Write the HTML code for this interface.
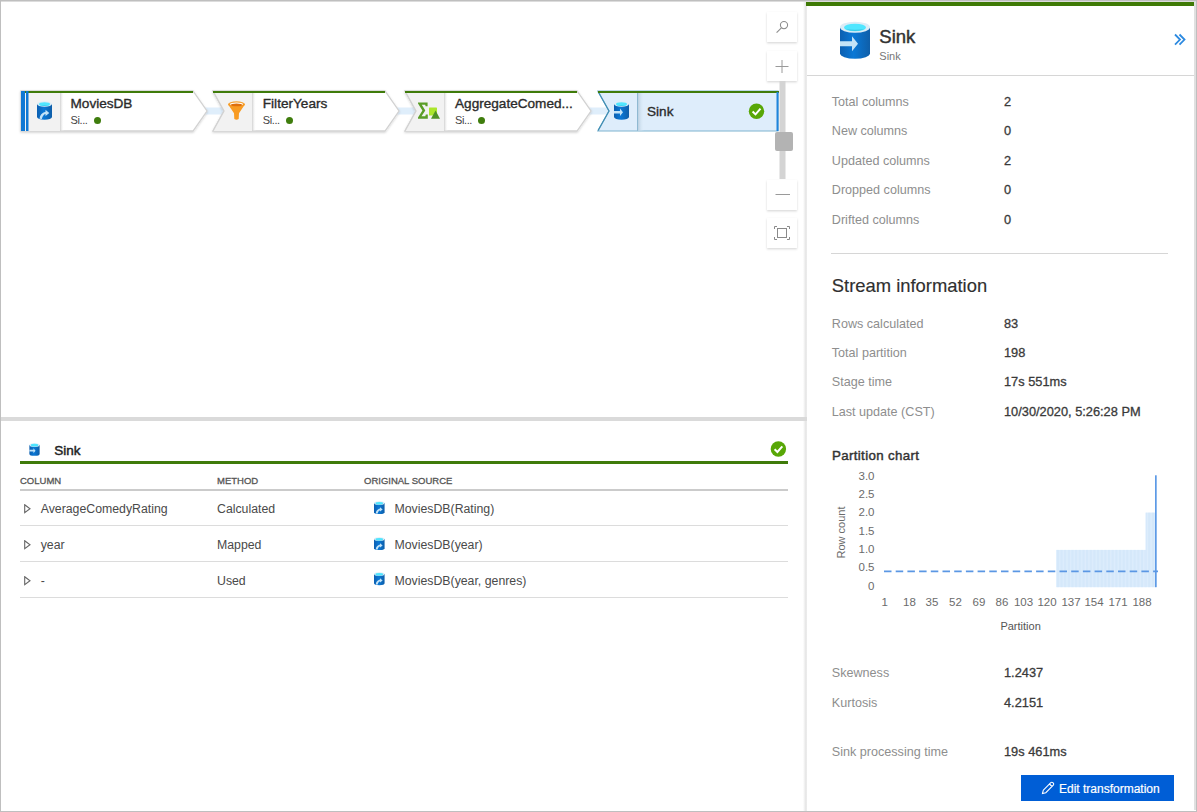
<!DOCTYPE html>
<html><head><meta charset="utf-8">
<style>
*{box-sizing:border-box;margin:0;padding:0}
html,body{width:1197px;height:812px;overflow:hidden;background:#fff;font-family:"Liberation Sans",sans-serif;}
.a{position:absolute;display:block}
.t{position:absolute;white-space:nowrap;line-height:1}
</style></head><body>

<svg class="a" style="left:0;top:0" width="806" height="417">
<defs><filter id="sh" x="-5%" y="-20%" width="110%" height="150%"><feDropShadow dx="0" dy="1" stdDeviation="0.8" flood-color="#000" flood-opacity="0.18"/></filter><filter id="sh2" x="-20%" y="-20%" width="140%" height="150%"><feDropShadow dx="0" dy="1.2" stdDeviation="1.2" flood-color="#000" flood-opacity="0.16"/></filter><linearGradient id="dv" x1="0" x2="1"><stop offset="0" stop-color="#d0d0d0"/><stop offset="1" stop-color="#ffffff" stop-opacity="0"/></linearGradient><linearGradient id="dvb" x1="0" x2="1"><stop offset="0" stop-color="#b9cfe0"/><stop offset="1" stop-color="#deedfa" stop-opacity="0"/></linearGradient></defs>
<rect x="204" y="107.5" width="22" height="7" fill="#dfeefb"/>
<rect x="396" y="107.5" width="22" height="7" fill="#dfeefb"/>
<rect x="588" y="107.5" width="22" height="7" fill="#dfeefb"/>
<polygon points="21,91 193,91 207,111 193,131 21,131 21,111" fill="#fff" stroke="#d2d2d2" stroke-width="1.3" filter="url(#sh)"/>
<polygon points="21,91 60,91 60,131 21,131 21,111" fill="#f2f2f2"/>
<rect x="60" y="92" width="4" height="39" fill="url(#dv)"/>
<rect x="21" y="91" width="172" height="2" fill="#3f7b0a"/>
<polygon points="213,91 385,91 399,111 385,131 213,131 224,111" fill="#fff" stroke="#d2d2d2" stroke-width="1.3" filter="url(#sh)"/>
<polygon points="213,91 252,91 252,131 213,131 224,111" fill="#f2f2f2"/>
<polyline points="213,91 224,111 213,131" fill="none" stroke="#d2d2d2" stroke-width="1.3"/>
<rect x="252" y="92" width="4" height="39" fill="url(#dv)"/>
<rect x="213" y="91" width="172" height="2" fill="#3f7b0a"/>
<polygon points="405,91 577,91 591,111 577,131 405,131 416,111" fill="#fff" stroke="#d2d2d2" stroke-width="1.3" filter="url(#sh)"/>
<polygon points="405,91 444,91 444,131 405,131 416,111" fill="#f2f2f2"/>
<polyline points="405,91 416,111 405,131" fill="none" stroke="#d2d2d2" stroke-width="1.3"/>
<rect x="444" y="92" width="4" height="39" fill="url(#dv)"/>
<rect x="405" y="91" width="172" height="2" fill="#3f7b0a"/>
<rect x="21" y="91" width="4" height="40" fill="#0f78d4"/><rect x="26" y="91" width="2.5" height="40" fill="#0f78d4"/>
<polygon points="598,91 778,91 778,131 598,131 609,111" fill="#deedfb" stroke="#7fb3cf" stroke-width="1.2"/>
<polyline points="598,91.5 609,111 598,130.5" fill="none" stroke="#3f8db3" stroke-width="1.2"/>
<rect x="637" y="92" width="1" height="39" fill="#8fb9d2"/><rect x="638" y="92" width="6" height="39" fill="url(#dvb)"/>
<rect x="598" y="91" width="181" height="2" fill="#3f7b0a"/>
<rect x="776.5" y="92" width="2" height="39" fill="#1e84dc"/>
<circle cx="756.5" cy="111.3" r="7.7" fill="#58a707"/><path d="M752.6,111.5 L755.5,114.4 L760.5,108.6" stroke="#fff" stroke-width="2" fill="none"/>
<g transform="translate(228,101.3)"><ellipse cx="8.5" cy="3" rx="8.5" ry="3" fill="#f7a436"/><path d="M0,3 L6,12 L6.3,17.8 Q8.5,19.3 10.7,17.8 L11,12 L17,3 Z" fill="#f89b22"/><ellipse cx="8.5" cy="3" rx="6.5" ry="1.8" fill="#fff"/><ellipse cx="8.5" cy="3.6" rx="6" ry="1.4" fill="#de6f0c"/></g>
<path d="M418,102.4 H427.6 V106.2 H425.6 L425.2,104.7 H421.8 L425.3,110.5 L421.5,116.3 H425.3 L425.8,114.6 H427.8 V118.7 H418 V117.6 L422.4,110.5 L418,103.6 Z" fill="#5a9d27"/><rect x="429" y="107.6" width="8" height="8" rx="0.6" fill="#abe62c"/><path d="M431,118.7 L435.6,110.6 L440,118.7 Z" fill="#4f9225"/>
<rect x="767" y="12" width="30" height="30" fill="#fff" filter="url(#sh2)"/>
<rect x="767" y="51" width="30" height="30" fill="#fff" filter="url(#sh2)"/>
<rect x="767" y="180" width="30" height="30" fill="#fff" filter="url(#sh2)"/>
<rect x="767" y="218" width="30" height="30" fill="#fff" filter="url(#sh2)"/>
<rect x="779.5" y="81" width="6" height="98" fill="#d4d4d4"/>
<rect x="775" y="132" width="18" height="19" rx="2" fill="#b3b3b3"/>
<circle cx="784" cy="25.1" r="3.6" stroke="#8c8c8c" stroke-width="1.1" fill="none"/><path d="M781.4,27.8 L776.6,32.6" stroke="#8c8c8c" stroke-width="1.1"/>
<path d="M782,60 V73 M775.5,66.5 H788.5" stroke="#9a9a9a" stroke-width="1" fill="none"/>
<path d="M775.5,194.5 H790" stroke="#9a9a9a" stroke-width="1" fill="none"/>
<rect x="777.5" y="228.5" width="9" height="9" stroke="#8a8a8a" stroke-width="1" fill="none"/><path d="M774.5,229 V226.5 H777 M787,226.5 H789.5 V229 M789.5,237 V239.5 H787 M777,239.5 H774.5 V237" stroke="#8a8a8a" stroke-width="1" fill="none"/>
</svg>
<svg class="a" style="left:36.5px;top:101px" width="15" height="19" viewBox="0 0 30 38">
<defs><linearGradient id="gn1" x1="0" x2="1" y1="0" y2="0"><stop offset="0" stop-color="#0c5fb0"/><stop offset="0.45" stop-color="#0a78d6"/><stop offset="1" stop-color="#0f5ea8"/></linearGradient></defs>
<path d="M0,6 L0,32 A15,5.5 0 0 0 30,32 L30,6 Z" fill="url(#gn1)"/>
<ellipse cx="15" cy="6" rx="15" ry="5.5" fill="#dcecf6"/>
<ellipse cx="15" cy="6.3" rx="11" ry="3.8" fill="#50e6ff"/>
<path d="M5,7.5 Q15,12 25,7.5 Q15,9.5 5,7.5Z" fill="#2fb7d6" opacity=".6"/><path d="M5,35.5 Q6,24 17,21.5 L17,17.5 L24.5,23.8 L17,30 L17,26 Q11.5,27.5 9.8,36 Z" fill="#c3e3f7"/></svg>
<svg class="a" style="left:613.7px;top:101.3px" width="15" height="19" viewBox="0 0 30 38">
<defs><linearGradient id="gn4" x1="0" x2="1" y1="0" y2="0"><stop offset="0" stop-color="#0c5fb0"/><stop offset="0.45" stop-color="#0a78d6"/><stop offset="1" stop-color="#0f5ea8"/></linearGradient></defs>
<path d="M0,6 L0,32 A15,5.5 0 0 0 30,32 L30,6 Z" fill="url(#gn4)"/>
<ellipse cx="15" cy="6" rx="15" ry="5.5" fill="#dcecf6"/>
<ellipse cx="15" cy="6.3" rx="11" ry="3.8" fill="#50e6ff"/>
<path d="M5,7.5 Q15,12 25,7.5 Q15,9.5 5,7.5Z" fill="#2fb7d6" opacity=".6"/><path d="M0,20 L12,20 L12,15 L18,22.5 L12,30 L12,25 L0,25 Z" fill="#c3e3f7"/></svg>
<div class="t" style="left:70.5px;top:96px;line-height:15px;font-size:13.6px;color:#2b2b2b;font-weight:normal;-webkit-text-stroke:0.35px #2b2b2b">MoviesDB</div>
<div class="t" style="left:70.5px;top:114px;line-height:12px;font-size:11px;color:#444;font-weight:normal;letter-spacing:-0.4px">Si...</div>
<div class="t" style="left:262.8px;top:96px;line-height:15px;font-size:13.6px;color:#2b2b2b;font-weight:normal;-webkit-text-stroke:0.35px #2b2b2b">FilterYears</div>
<div class="t" style="left:262.8px;top:114px;line-height:12px;font-size:11px;color:#444;font-weight:normal;letter-spacing:-0.4px">Si...</div>
<div class="t" style="left:455px;top:96px;line-height:15px;font-size:13.6px;color:#2b2b2b;font-weight:normal;-webkit-text-stroke:0.35px #2b2b2b">AggregateComed...</div>
<div class="t" style="left:455px;top:114px;line-height:12px;font-size:11px;color:#444;font-weight:normal;letter-spacing:-0.4px">Si...</div>
<div class="t" style="left:647px;top:104px;line-height:15px;font-size:13.6px;color:#2b2b2b;font-weight:normal;-webkit-text-stroke:0.35px #2b2b2b">Sink</div>
<div class="a" style="left:94.1px;top:117.3px;width:7px;height:7px;border-radius:50%;background:#3f7d0d"></div>
<div class="a" style="left:286.1px;top:117.3px;width:7px;height:7px;border-radius:50%;background:#3f7d0d"></div>
<div class="a" style="left:478.1px;top:117.3px;width:7px;height:7px;border-radius:50%;background:#3f7d0d"></div>
<div class="a" style="left:1px;top:417px;width:805px;height:4px;background:#dadada"></div>
<div class="a" style="left:593px;top:418.5px;width:16px;height:2.5px;background:#222"></div>
<svg class="a" style="left:29.2px;top:443px" width="11" height="13" viewBox="0 0 30 38">
<defs><linearGradient id="gb1" x1="0" x2="1" y1="0" y2="0"><stop offset="0" stop-color="#0c5fb0"/><stop offset="0.45" stop-color="#0a78d6"/><stop offset="1" stop-color="#0f5ea8"/></linearGradient></defs>
<path d="M0,6 L0,32 A15,5.5 0 0 0 30,32 L30,6 Z" fill="url(#gb1)"/>
<ellipse cx="15" cy="6" rx="15" ry="5.5" fill="#dcecf6"/>
<ellipse cx="15" cy="6.3" rx="11" ry="3.8" fill="#50e6ff"/>
<path d="M5,7.5 Q15,12 25,7.5 Q15,9.5 5,7.5Z" fill="#2fb7d6" opacity=".6"/><path d="M0,20 L12,20 L12,15 L18,22.5 L12,30 L12,25 L0,25 Z" fill="#c3e3f7"/></svg>
<div class="t" style="left:54.3px;top:443px;line-height:15px;font-size:13.5px;color:#222;font-weight:normal;-webkit-text-stroke:0.45px #222">Sink</div>
<svg class="a" style="left:770px;top:441px" width="17" height="17"><circle cx="8.4" cy="8" r="7.7" fill="#58a707"/><path d="M4.6,8.2 L7.4,11 L12.3,5.3" stroke="#fff" stroke-width="2" fill="none"/></svg>
<div class="a" style="left:20px;top:461px;width:768px;height:3px;background:#3f7b0a"></div>
<div class="t" style="left:20px;top:475px;line-height:11px;font-size:9.5px;color:#555;font-weight:normal;-webkit-text-stroke:0.3px #555">COLUMN</div>
<div class="t" style="left:217px;top:475px;line-height:11px;font-size:9.5px;color:#555;font-weight:normal;-webkit-text-stroke:0.3px #555">METHOD</div>
<div class="t" style="left:364px;top:475px;line-height:11px;font-size:9.5px;color:#555;font-weight:normal;-webkit-text-stroke:0.3px #555">ORIGINAL SOURCE</div>
<div class="a" style="left:20px;top:489px;width:768px;height:2px;background:#cbcbcb"></div>
<svg class="a" style="left:24px;top:504.29999999999995px" width="8" height="10"><path d="M0.7,0.7 L6,4.7 L0.7,8.7 Z" stroke="#666" stroke-width="1.1" fill="none"/></svg>
<div class="t" style="left:40.7px;top:502px;line-height:14px;font-size:12.3px;color:#4a4a4a;font-weight:normal;">AverageComedyRating</div>
<div class="t" style="left:217px;top:502px;line-height:14px;font-size:12.3px;color:#4a4a4a;font-weight:normal;">Calculated</div>
<svg class="a" style="left:374px;top:500.79999999999995px" width="10.6" height="13.4" viewBox="0 0 30 38">
<defs><linearGradient id="gr0" x1="0" x2="1" y1="0" y2="0"><stop offset="0" stop-color="#0c5fb0"/><stop offset="0.45" stop-color="#0a78d6"/><stop offset="1" stop-color="#0f5ea8"/></linearGradient></defs>
<path d="M0,6 L0,32 A15,5.5 0 0 0 30,32 L30,6 Z" fill="url(#gr0)"/>
<ellipse cx="15" cy="6" rx="15" ry="5.5" fill="#dcecf6"/>
<ellipse cx="15" cy="6.3" rx="11" ry="3.8" fill="#50e6ff"/>
<path d="M5,7.5 Q15,12 25,7.5 Q15,9.5 5,7.5Z" fill="#2fb7d6" opacity=".6"/><path d="M5,35.5 Q6,24 17,21.5 L17,17.5 L24.5,23.8 L17,30 L17,26 Q11.5,27.5 9.8,36 Z" fill="#c3e3f7"/></svg>
<div class="t" style="left:394.5px;top:502px;line-height:14px;font-size:12.3px;color:#4a4a4a;font-weight:normal;">MoviesDB(Rating)</div>
<div class="a" style="left:20px;top:525.0px;width:768px;height:1px;background:#dcdcdc"></div>
<svg class="a" style="left:24px;top:540.0px" width="8" height="10"><path d="M0.7,0.7 L6,4.7 L0.7,8.7 Z" stroke="#666" stroke-width="1.1" fill="none"/></svg>
<div class="t" style="left:40.7px;top:538px;line-height:14px;font-size:12.3px;color:#4a4a4a;font-weight:normal;">year</div>
<div class="t" style="left:217px;top:538px;line-height:14px;font-size:12.3px;color:#4a4a4a;font-weight:normal;">Mapped</div>
<svg class="a" style="left:374px;top:536.5px" width="10.6" height="13.4" viewBox="0 0 30 38">
<defs><linearGradient id="gr1" x1="0" x2="1" y1="0" y2="0"><stop offset="0" stop-color="#0c5fb0"/><stop offset="0.45" stop-color="#0a78d6"/><stop offset="1" stop-color="#0f5ea8"/></linearGradient></defs>
<path d="M0,6 L0,32 A15,5.5 0 0 0 30,32 L30,6 Z" fill="url(#gr1)"/>
<ellipse cx="15" cy="6" rx="15" ry="5.5" fill="#dcecf6"/>
<ellipse cx="15" cy="6.3" rx="11" ry="3.8" fill="#50e6ff"/>
<path d="M5,7.5 Q15,12 25,7.5 Q15,9.5 5,7.5Z" fill="#2fb7d6" opacity=".6"/><path d="M5,35.5 Q6,24 17,21.5 L17,17.5 L24.5,23.8 L17,30 L17,26 Q11.5,27.5 9.8,36 Z" fill="#c3e3f7"/></svg>
<div class="t" style="left:394.5px;top:538px;line-height:14px;font-size:12.3px;color:#4a4a4a;font-weight:normal;">MoviesDB(year)</div>
<div class="a" style="left:20px;top:560.8px;width:768px;height:1px;background:#dcdcdc"></div>
<svg class="a" style="left:24px;top:575.6999999999999px" width="8" height="10"><path d="M0.7,0.7 L6,4.7 L0.7,8.7 Z" stroke="#666" stroke-width="1.1" fill="none"/></svg>
<div class="t" style="left:40.7px;top:574px;line-height:14px;font-size:12.3px;color:#4a4a4a;font-weight:normal;">-</div>
<div class="t" style="left:217px;top:574px;line-height:14px;font-size:12.3px;color:#4a4a4a;font-weight:normal;">Used</div>
<svg class="a" style="left:374px;top:572.1999999999999px" width="10.6" height="13.4" viewBox="0 0 30 38">
<defs><linearGradient id="gr2" x1="0" x2="1" y1="0" y2="0"><stop offset="0" stop-color="#0c5fb0"/><stop offset="0.45" stop-color="#0a78d6"/><stop offset="1" stop-color="#0f5ea8"/></linearGradient></defs>
<path d="M0,6 L0,32 A15,5.5 0 0 0 30,32 L30,6 Z" fill="url(#gr2)"/>
<ellipse cx="15" cy="6" rx="15" ry="5.5" fill="#dcecf6"/>
<ellipse cx="15" cy="6.3" rx="11" ry="3.8" fill="#50e6ff"/>
<path d="M5,7.5 Q15,12 25,7.5 Q15,9.5 5,7.5Z" fill="#2fb7d6" opacity=".6"/><path d="M5,35.5 Q6,24 17,21.5 L17,17.5 L24.5,23.8 L17,30 L17,26 Q11.5,27.5 9.8,36 Z" fill="#c3e3f7"/></svg>
<div class="t" style="left:394.5px;top:574px;line-height:14px;font-size:12.3px;color:#4a4a4a;font-weight:normal;">MoviesDB(year, genres)</div>
<div class="a" style="left:20px;top:596.6px;width:768px;height:1px;background:#dcdcdc"></div>
<div class="a" style="left:803px;top:0;width:4px;height:812px;background:linear-gradient(to right,rgba(0,0,0,0),rgba(0,0,0,0.06) 40%,rgba(0,0,0,0.11) 75%,rgba(0,0,0,0.05))"></div>
<div class="a" style="left:1px;top:417px;width:806px;height:4px;background:#dadada"></div>
<div class="a" style="left:806px;top:2px;width:388px;height:4px;background:#3f7a06"></div>
<div class="a" style="left:1194px;top:2px;width:2px;height:808px;background:#e0e0e0"></div>
<svg class="a" style="left:840px;top:21.3px" width="30" height="38.5" viewBox="0 0 30 38">
<defs><linearGradient id="ghdr" x1="0" x2="1" y1="0" y2="0"><stop offset="0" stop-color="#0c5fb0"/><stop offset="0.45" stop-color="#0a78d6"/><stop offset="1" stop-color="#0f5ea8"/></linearGradient></defs>
<path d="M0,6 L0,32 A15,5.5 0 0 0 30,32 L30,6 Z" fill="url(#ghdr)"/>
<ellipse cx="15" cy="6" rx="15" ry="5.5" fill="#dcecf6"/>
<ellipse cx="15" cy="6.3" rx="11" ry="3.8" fill="#50e6ff"/>
<path d="M5,7.5 Q15,12 25,7.5 Q15,9.5 5,7.5Z" fill="#2fb7d6" opacity=".6"/><path d="M0,20 L12,20 L12,15 L18,22.5 L12,30 L12,25 L0,25 Z" fill="#c3e3f7"/></svg>
<div class="t" style="left:879.3px;top:26px;line-height:21px;font-size:18.5px;color:#333;font-weight:normal;-webkit-text-stroke:0.45px #333">Sink</div>
<div class="t" style="left:879.3px;top:50px;line-height:12px;font-size:11px;color:#777;font-weight:normal;">Sink</div>
<svg class="a" style="left:1174px;top:33px" width="12" height="14"><path d="M1,1.5 L6,6.6 L1,11.7 M5.5,1.5 L10.5,6.6 L5.5,11.7" stroke="#2d8ae0" stroke-width="1.8" fill="none"/></svg>
<div class="a" style="left:807px;top:75px;width:387px;height:1px;background:#d6d6d6"></div>
<div class="t" style="left:831.8px;top:95px;line-height:14px;font-size:12.6px;color:#8e8e8e;font-weight:normal;">Total columns</div>
<div class="t" style="left:1004px;top:94px;line-height:15px;font-size:12.8px;color:#3a3a3a;font-weight:normal;-webkit-text-stroke:0.3px #3a3a3a">2</div>
<div class="t" style="left:831.8px;top:124px;line-height:14px;font-size:12.6px;color:#8e8e8e;font-weight:normal;">New columns</div>
<div class="t" style="left:1004px;top:123px;line-height:15px;font-size:12.8px;color:#3a3a3a;font-weight:normal;-webkit-text-stroke:0.3px #3a3a3a">0</div>
<div class="t" style="left:831.8px;top:154px;line-height:14px;font-size:12.6px;color:#8e8e8e;font-weight:normal;">Updated columns</div>
<div class="t" style="left:1004px;top:153px;line-height:15px;font-size:12.8px;color:#3a3a3a;font-weight:normal;-webkit-text-stroke:0.3px #3a3a3a">2</div>
<div class="t" style="left:831.8px;top:183px;line-height:14px;font-size:12.6px;color:#8e8e8e;font-weight:normal;">Dropped columns</div>
<div class="t" style="left:1004px;top:182px;line-height:15px;font-size:12.8px;color:#3a3a3a;font-weight:normal;-webkit-text-stroke:0.3px #3a3a3a">0</div>
<div class="t" style="left:831.8px;top:213px;line-height:14px;font-size:12.6px;color:#8e8e8e;font-weight:normal;">Drifted columns</div>
<div class="t" style="left:1004px;top:212px;line-height:15px;font-size:12.8px;color:#3a3a3a;font-weight:normal;-webkit-text-stroke:0.3px #3a3a3a">0</div>
<div class="a" style="left:831px;top:253px;width:337px;height:1px;background:#d6d6d6"></div>
<div class="t" style="left:831.8px;top:275px;line-height:21px;font-size:18.4px;color:#2f2f2f;font-weight:normal;-webkit-text-stroke:0.15px #2f2f2f">Stream information</div>
<div class="t" style="left:831.8px;top:317px;line-height:14px;font-size:12.6px;color:#8e8e8e;font-weight:normal;">Rows calculated</div>
<div class="t" style="left:1004px;top:316px;line-height:15px;font-size:12.8px;color:#3a3a3a;font-weight:normal;-webkit-text-stroke:0.3px #3a3a3a">83</div>
<div class="t" style="left:831.8px;top:346px;line-height:14px;font-size:12.6px;color:#8e8e8e;font-weight:normal;">Total partition</div>
<div class="t" style="left:1004px;top:345px;line-height:15px;font-size:12.8px;color:#3a3a3a;font-weight:normal;-webkit-text-stroke:0.3px #3a3a3a">198</div>
<div class="t" style="left:831.8px;top:375px;line-height:14px;font-size:12.6px;color:#8e8e8e;font-weight:normal;">Stage time</div>
<div class="t" style="left:1004px;top:374px;line-height:15px;font-size:12.8px;color:#3a3a3a;font-weight:normal;-webkit-text-stroke:0.3px #3a3a3a">17s 551ms</div>
<div class="t" style="left:831.8px;top:405px;line-height:14px;font-size:12.6px;color:#8e8e8e;font-weight:normal;">Last update (CST)</div>
<div class="t" style="left:1004px;top:404px;line-height:15px;font-size:12.8px;color:#3a3a3a;font-weight:normal;-webkit-text-stroke:0.3px #3a3a3a">10/30/2020, 5:26:28 PM</div>
<div class="t" style="left:832px;top:448px;line-height:15px;font-size:13.3px;color:#333;font-weight:normal;-webkit-text-stroke:0.45px #333;letter-spacing:0.35px">Partition chart</div>
<svg class="a" style="left:820px;top:465px" width="360" height="170">
<text x="54.5" y="125.2" text-anchor="end" font-family="Liberation Sans" font-size="11.5" fill="#6b6b6b">0</text>
<text x="54.5" y="106.4" text-anchor="end" font-family="Liberation Sans" font-size="11.5" fill="#6b6b6b">0.5</text>
<text x="54.5" y="87.8" text-anchor="end" font-family="Liberation Sans" font-size="11.5" fill="#6b6b6b">1.0</text>
<text x="54.5" y="69.8" text-anchor="end" font-family="Liberation Sans" font-size="11.5" fill="#6b6b6b">1.5</text>
<text x="54.5" y="51.2" text-anchor="end" font-family="Liberation Sans" font-size="11.5" fill="#6b6b6b">2.0</text>
<text x="54.5" y="32.8" text-anchor="end" font-family="Liberation Sans" font-size="11.5" fill="#6b6b6b">2.5</text>
<text x="54.5" y="15.2" text-anchor="end" font-family="Liberation Sans" font-size="11.5" fill="#6b6b6b">3.0</text>
<rect x="236.0" y="84.9" width="89.5" height="37.3" fill="#e0effd"/>
<rect x="325.4" y="47.6" width="9.6" height="74.6" fill="#e0effd"/>
<rect x="237.06" y="84.9" width="0.6" height="37.3" fill="#cde3f8"/>
<rect x="238.44" y="84.9" width="0.6" height="37.3" fill="#cde3f8"/>
<rect x="239.82" y="84.9" width="0.6" height="37.3" fill="#cde3f8"/>
<rect x="241.19" y="84.9" width="0.6" height="37.3" fill="#cde3f8"/>
<rect x="242.57" y="84.9" width="0.6" height="37.3" fill="#cde3f8"/>
<rect x="243.95" y="84.9" width="0.6" height="37.3" fill="#cde3f8"/>
<rect x="245.32" y="84.9" width="0.6" height="37.3" fill="#cde3f8"/>
<rect x="246.70" y="84.9" width="0.6" height="37.3" fill="#cde3f8"/>
<rect x="248.07" y="84.9" width="0.6" height="37.3" fill="#cde3f8"/>
<rect x="249.45" y="84.9" width="0.6" height="37.3" fill="#cde3f8"/>
<rect x="250.83" y="84.9" width="0.6" height="37.3" fill="#cde3f8"/>
<rect x="252.20" y="84.9" width="0.6" height="37.3" fill="#cde3f8"/>
<rect x="253.58" y="84.9" width="0.6" height="37.3" fill="#cde3f8"/>
<rect x="254.96" y="84.9" width="0.6" height="37.3" fill="#cde3f8"/>
<rect x="256.33" y="84.9" width="0.6" height="37.3" fill="#cde3f8"/>
<rect x="257.71" y="84.9" width="0.6" height="37.3" fill="#cde3f8"/>
<rect x="259.09" y="84.9" width="0.6" height="37.3" fill="#cde3f8"/>
<rect x="260.46" y="84.9" width="0.6" height="37.3" fill="#cde3f8"/>
<rect x="261.84" y="84.9" width="0.6" height="37.3" fill="#cde3f8"/>
<rect x="263.22" y="84.9" width="0.6" height="37.3" fill="#cde3f8"/>
<rect x="264.59" y="84.9" width="0.6" height="37.3" fill="#cde3f8"/>
<rect x="265.97" y="84.9" width="0.6" height="37.3" fill="#cde3f8"/>
<rect x="267.35" y="84.9" width="0.6" height="37.3" fill="#cde3f8"/>
<rect x="268.72" y="84.9" width="0.6" height="37.3" fill="#cde3f8"/>
<rect x="270.10" y="84.9" width="0.6" height="37.3" fill="#cde3f8"/>
<rect x="271.48" y="84.9" width="0.6" height="37.3" fill="#cde3f8"/>
<rect x="272.85" y="84.9" width="0.6" height="37.3" fill="#cde3f8"/>
<rect x="274.23" y="84.9" width="0.6" height="37.3" fill="#cde3f8"/>
<rect x="275.60" y="84.9" width="0.6" height="37.3" fill="#cde3f8"/>
<rect x="276.98" y="84.9" width="0.6" height="37.3" fill="#cde3f8"/>
<rect x="278.36" y="84.9" width="0.6" height="37.3" fill="#cde3f8"/>
<rect x="279.73" y="84.9" width="0.6" height="37.3" fill="#cde3f8"/>
<rect x="281.11" y="84.9" width="0.6" height="37.3" fill="#cde3f8"/>
<rect x="282.49" y="84.9" width="0.6" height="37.3" fill="#cde3f8"/>
<rect x="283.86" y="84.9" width="0.6" height="37.3" fill="#cde3f8"/>
<rect x="285.24" y="84.9" width="0.6" height="37.3" fill="#cde3f8"/>
<rect x="286.62" y="84.9" width="0.6" height="37.3" fill="#cde3f8"/>
<rect x="287.99" y="84.9" width="0.6" height="37.3" fill="#cde3f8"/>
<rect x="289.37" y="84.9" width="0.6" height="37.3" fill="#cde3f8"/>
<rect x="290.75" y="84.9" width="0.6" height="37.3" fill="#cde3f8"/>
<rect x="292.12" y="84.9" width="0.6" height="37.3" fill="#cde3f8"/>
<rect x="293.50" y="84.9" width="0.6" height="37.3" fill="#cde3f8"/>
<rect x="294.88" y="84.9" width="0.6" height="37.3" fill="#cde3f8"/>
<rect x="296.25" y="84.9" width="0.6" height="37.3" fill="#cde3f8"/>
<rect x="297.63" y="84.9" width="0.6" height="37.3" fill="#cde3f8"/>
<rect x="299.00" y="84.9" width="0.6" height="37.3" fill="#cde3f8"/>
<rect x="300.38" y="84.9" width="0.6" height="37.3" fill="#cde3f8"/>
<rect x="301.76" y="84.9" width="0.6" height="37.3" fill="#cde3f8"/>
<rect x="303.13" y="84.9" width="0.6" height="37.3" fill="#cde3f8"/>
<rect x="304.51" y="84.9" width="0.6" height="37.3" fill="#cde3f8"/>
<rect x="305.89" y="84.9" width="0.6" height="37.3" fill="#cde3f8"/>
<rect x="307.26" y="84.9" width="0.6" height="37.3" fill="#cde3f8"/>
<rect x="308.64" y="84.9" width="0.6" height="37.3" fill="#cde3f8"/>
<rect x="310.02" y="84.9" width="0.6" height="37.3" fill="#cde3f8"/>
<rect x="311.39" y="84.9" width="0.6" height="37.3" fill="#cde3f8"/>
<rect x="312.77" y="84.9" width="0.6" height="37.3" fill="#cde3f8"/>
<rect x="314.15" y="84.9" width="0.6" height="37.3" fill="#cde3f8"/>
<rect x="315.52" y="84.9" width="0.6" height="37.3" fill="#cde3f8"/>
<rect x="316.90" y="84.9" width="0.6" height="37.3" fill="#cde3f8"/>
<rect x="318.28" y="84.9" width="0.6" height="37.3" fill="#cde3f8"/>
<rect x="319.65" y="84.9" width="0.6" height="37.3" fill="#cde3f8"/>
<rect x="321.03" y="84.9" width="0.6" height="37.3" fill="#cde3f8"/>
<rect x="322.41" y="84.9" width="0.6" height="37.3" fill="#cde3f8"/>
<rect x="323.78" y="84.9" width="0.6" height="37.3" fill="#cde3f8"/>
<rect x="325.16" y="84.9" width="0.6" height="37.3" fill="#cde3f8"/>
<rect x="326.53" y="47.6" width="0.6" height="74.6" fill="#cde3f8"/>
<rect x="327.91" y="47.6" width="0.6" height="74.6" fill="#cde3f8"/>
<rect x="329.29" y="47.6" width="0.6" height="74.6" fill="#cde3f8"/>
<rect x="330.66" y="47.6" width="0.6" height="74.6" fill="#cde3f8"/>
<rect x="332.04" y="47.6" width="0.6" height="74.6" fill="#cde3f8"/>
<rect x="333.42" y="47.6" width="0.6" height="74.6" fill="#cde3f8"/>
<rect x="334.79" y="47.6" width="0.6" height="74.6" fill="#cde3f8"/>
<rect x="335.0" y="10.3" width="1.7" height="111.9" fill="#5d9ae6"/>
<line x1="64" x2="338" y1="106.39999999999998" y2="106.39999999999998" stroke="#5b97e4" stroke-width="1.8" stroke-dasharray="7.5 4.2"/>
<text x="64.60000000000002" y="141.2" text-anchor="middle" font-family="Liberation Sans" font-size="11.5" fill="#6b6b6b">1</text>
<text x="89.5" y="141.2" text-anchor="middle" font-family="Liberation Sans" font-size="11.5" fill="#6b6b6b">18</text>
<text x="112" y="141.2" text-anchor="middle" font-family="Liberation Sans" font-size="11.5" fill="#6b6b6b">35</text>
<text x="135.5" y="141.2" text-anchor="middle" font-family="Liberation Sans" font-size="11.5" fill="#6b6b6b">52</text>
<text x="159" y="141.2" text-anchor="middle" font-family="Liberation Sans" font-size="11.5" fill="#6b6b6b">69</text>
<text x="182" y="141.2" text-anchor="middle" font-family="Liberation Sans" font-size="11.5" fill="#6b6b6b">86</text>
<text x="203.5" y="141.2" text-anchor="middle" font-family="Liberation Sans" font-size="11.5" fill="#6b6b6b">103</text>
<text x="227" y="141.2" text-anchor="middle" font-family="Liberation Sans" font-size="11.5" fill="#6b6b6b">120</text>
<text x="251" y="141.2" text-anchor="middle" font-family="Liberation Sans" font-size="11.5" fill="#6b6b6b">137</text>
<text x="274" y="141.2" text-anchor="middle" font-family="Liberation Sans" font-size="11.5" fill="#6b6b6b">154</text>
<text x="298" y="141.2" text-anchor="middle" font-family="Liberation Sans" font-size="11.5" fill="#6b6b6b">171</text>
<text x="322" y="141.2" text-anchor="middle" font-family="Liberation Sans" font-size="11.5" fill="#6b6b6b">188</text>
<text x="200.60000000000002" y="165.0" text-anchor="middle" font-family="Liberation Sans" font-size="11" fill="#555">Partition</text>
<text transform="translate(25,67.5) rotate(-90)" text-anchor="middle" font-family="Liberation Sans" font-size="11" fill="#6b6b6b">Row count</text>
</svg>
<div class="t" style="left:831.8px;top:666px;line-height:14px;font-size:12.6px;color:#8e8e8e;font-weight:normal;">Skewness</div>
<div class="t" style="left:1004px;top:665px;line-height:15px;font-size:12.8px;color:#3a3a3a;font-weight:normal;-webkit-text-stroke:0.3px #3a3a3a">1.2437</div>
<div class="t" style="left:831.8px;top:696px;line-height:14px;font-size:12.6px;color:#8e8e8e;font-weight:normal;">Kurtosis</div>
<div class="t" style="left:1004px;top:695px;line-height:15px;font-size:12.8px;color:#3a3a3a;font-weight:normal;-webkit-text-stroke:0.3px #3a3a3a">4.2151</div>
<div class="t" style="left:831.8px;top:745px;line-height:14px;font-size:12.6px;color:#8e8e8e;font-weight:normal;">Sink processing time</div>
<div class="t" style="left:1004px;top:744px;line-height:15px;font-size:12.8px;color:#3a3a3a;font-weight:normal;-webkit-text-stroke:0.3px #3a3a3a">19s 461ms</div>
<div class="a" style="left:1021px;top:775px;width:153px;height:26px;background:#005ed6"></div>
<svg class="a" style="left:1040px;top:780px" width="16" height="16"><path d="M2.5,13.5 L3.3,10.2 L10.8,2.7 Q11.8,1.8 12.8,2.7 L13.3,3.2 Q14.2,4.2 13.3,5.2 L5.8,12.7 Z M9.5,4 L12,6.5" stroke="#fff" stroke-width="1.1" fill="none"/></svg>
<div class="t" style="left:1059px;top:782px;line-height:14px;font-size:12px;color:#fff;font-weight:normal;-webkit-text-stroke:0.2px #fff">Edit transformation</div>
<div class="a" style="left:0;top:1px;width:1197px;height:1px;background:#dcdcdc"></div>
<div class="a" style="left:0;top:0;width:1197px;height:812px;border:1px solid #bfbfbf;"></div>
</body></html>
